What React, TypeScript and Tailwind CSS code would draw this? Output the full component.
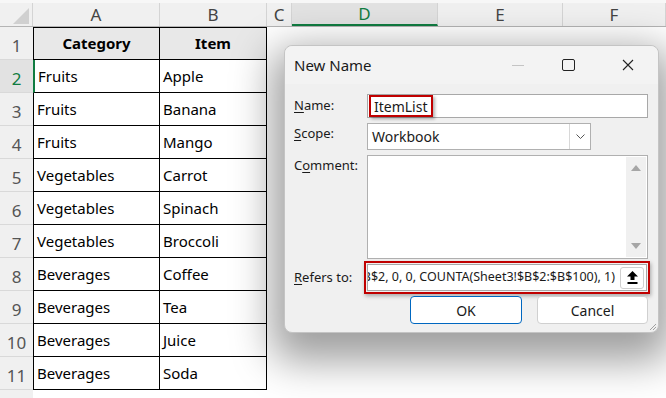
import React from "react";

const data = [
  ["Fruits", "Apple"],
  ["Fruits", "Banana"],
  ["Fruits", "Mango"],
  ["Vegetables", "Carrot"],
  ["Vegetables", "Spinach"],
  ["Vegetables", "Broccoli"],
  ["Beverages", "Coffee"],
  ["Beverages", "Tea"],
  ["Beverages", "Juice"],
  ["Beverages", "Soda"],
];

const cols = [
  { l: "A", w: "w-[127px]" },
  { l: "B", w: "w-[107px]" },
  { l: "C", w: "w-[25px]" },
  { l: "D", w: "w-[146px]" },
  { l: "E", w: "w-[125px]" },
  { l: "F", w: "flex-1" },
];

const RowHead = ({ n, active }: { n: number; active?: boolean }) => (
  <div
    className={
      "w-[33px] shrink-0 h-full flex justify-center items-center pt-[6px] text-[17px] border-b border-[#d9d9d9] " +
      (active ? "bg-[#e2e2e2] text-[#107c41]" : "bg-[#f0f0f0] text-[#555]")
    }
  >
    {n}
  </div>
);

const Sheet = () => (
  <div className="font-['Noto_Sans',sans-serif] bg-white">
    <div className="h-[3px] bg-[#f7f7f7]" />
    {/* column headers */}
    <div className="flex h-[24px] bg-[#f0f0f0] border-b border-[#b4b4b4]">
      <div className="w-[33px] shrink-0 relative border-r border-[#d4d4d4]">
        <svg className="absolute right-[3px] bottom-[2px]" width="16" height="16" viewBox="0 0 16 16">
          <polygon points="16,0 16,16 0,16" fill="#d0d0d0" />
        </svg>
      </div>
      {cols.map((c) => (
        <div
          key={c.l}
          className={
            c.w +
            " shrink-0 flex items-center justify-center text-[17px] border-r border-[#d4d4d4] " +
            (c.l === "D" ? "bg-[#e2e2e2] text-[#107c41] border-b-2 border-b-[#107c41]" : "text-[#444]")
          }
        >
          {c.l}
        </div>
      ))}
    </div>
    {/* row 1 */}
    <div className="flex h-[33px]">
      <RowHead n={1} />
      <div className="w-[127px] border border-black bg-[#e8e8e8] flex items-center justify-center font-bold text-[15px]">
        Category
      </div>
      <div className="w-[107px] border-y border-r border-black bg-[#e8e8e8] flex items-center justify-center font-bold text-[15px]">
        Item
      </div>
    </div>
    {data.map((r, i) => (
      <div key={i} className="flex h-[33px]">
        <RowHead n={i + 2} active={i === 0} />
        <div
          className={
            "w-[127px] border-b border-r border-black border-l flex items-center pl-[3px] text-[15px] " +
            (i === 0 ? "border-l-2 border-l-[#107c41]" : "border-l-black")
          }
        >
          {r[0]}
        </div>
        <div className="w-[107px] border-b border-r border-black flex items-center pl-[3px] text-[15px]">
          {r[1]}
        </div>
      </div>
    ))}
    <div className="flex h-[33px]">
      <RowHead n={12} />
    </div>
  </div>
);

const Label = ({ u, rest }: { u: string; rest: string }) => (
  <span>
    <span className="underline underline-offset-2">{u}</span>
    {rest}
  </span>
);

const Dialog = () => (
  <div className="absolute left-[284px] top-[45px] w-[375px] h-[288px] rounded-lg border border-[#c4c4c4] bg-[#f0f0f0] shadow-[0_16px_40px_12px_rgba(0,0,0,0.38)] font-['Noto_Sans',sans-serif] text-[#1a1a1a]">
    <div className="h-[38px] flex items-center pl-[9px] rounded-t-lg bg-[#f3f3f3]">
      <span className="text-[15px]">New Name</span>
      <div className="ml-auto flex h-full">
        <div className="w-[40px] flex items-center justify-center">
          <div className="w-[12px] h-px bg-[#c4c4c4]" />
        </div>
        <div className="w-[60px] flex items-center justify-center">
          <div className="w-[13px] h-[12px] border border-[#222] rounded-[2px]" />
        </div>
        <div className="w-[60px] flex items-center justify-center">
          <svg width="12" height="12" viewBox="0 0 12 12">
            <path d="M1 1L11 11M11 1L1 11" stroke="#222" strokeWidth="1.1" />
          </svg>
        </div>
      </div>
    </div>

    <div className="pl-[9px] pr-[10px] pt-[10px] text-[13px]">
      {/* Name */}
      <div className="flex">
        <div className="w-[73px] shrink-0 pt-[2px]">
          <Label u="N" rest="ame:" />
        </div>
        <div className="flex-1 min-w-0 h-[24px] border border-[#a8a8a8] bg-white flex items-center">
          <span className="ml-[1px] h-[22px] px-[3px] border-2 border-[#c00000] shadow-[2px_2px_3px_rgba(0,0,0,0.3)] flex items-center text-[14px]">
            ItemList
          </span>
        </div>
      </div>
      {/* Scope */}
      <div className="flex mt-[5px]">
        <div className="w-[73px] shrink-0 pt-[1px]">
          <Label u="S" rest="cope:" />
        </div>
        <div className="w-[224px] h-[27px] border border-[#b0b0b0] bg-white flex">
          <div className="flex-1 flex items-center pl-[4px] text-[14px]">Workbook</div>
          <div className="w-[21px] border-l border-[#d8d8d8] flex items-center justify-center">
            <svg width="9" height="6" viewBox="0 0 9 6">
              <path d="M0.5 0.5L4.5 4.5L8.5 0.5" stroke="#555" fill="none" strokeWidth="1" />
            </svg>
          </div>
        </div>
      </div>
      {/* Comment */}
      <div className="flex mt-[5px]">
        <div className="w-[73px] shrink-0 pt-[1px]">
          C<span className="underline underline-offset-2">o</span>mment:
        </div>
        <div className="flex-1 min-w-0 h-[104px] border border-[#b0b0b0] bg-white flex justify-end">
          <div className="w-[20px] my-[1px] mr-[1px] bg-[#f0f0f0] flex flex-col items-center justify-between py-[8px]">
            <svg width="10" height="6" viewBox="0 0 10 6">
              <polygon points="5,0 10,6 0,6" fill="#a6a6a6" />
            </svg>
            <svg width="10" height="6" viewBox="0 0 10 6">
              <polygon points="0,0 10,0 5,6" fill="#a6a6a6" />
            </svg>
          </div>
        </div>
      </div>
      {/* Refers to */}
      <div className="flex items-center mt-[2px]">
        <div className="w-[73px] shrink-0 whitespace-nowrap">
          <Label u="R" rest="efers to:" />
        </div>
        <div className="flex-1 min-w-0 ml-[-3px] mr-[-2px] h-[33px] border-2 border-[#c00000] shadow-[1px_2px_4px_rgba(0,0,0,0.3)] p-px">
          <div className="h-full border border-[#a8a8a8] bg-white flex items-center">
            <div className="flex-1 min-w-0 overflow-hidden flex justify-end pr-[5px] text-[12.5px] whitespace-nowrap">
              <span className="shrink-0">=OFFSET(Sheet3!$B$2, 0, 0, COUNTA(Sheet3!$B$2:$B$100), 1)</span>
            </div>
            <div className="w-[24px] h-[22px] shrink-0 mr-[2px] border border-[#cfcfcf] rounded-[3px] bg-white flex items-center justify-center">
              <svg width="11" height="13" viewBox="0 0 11 13">
                <polygon points="5.5,0 11,5.5 7.5,5.5 7.5,9 3.5,9 3.5,5.5 0,5.5" fill="#000" />
                <rect x="0.5" y="11" width="10" height="2" fill="#000" />
              </svg>
            </div>
          </div>
        </div>
      </div>
      {/* Buttons */}
      <div className="flex justify-end gap-[15px] mt-[2px]">
        <button className="w-[112px] h-[28px] border border-[#0067c0] rounded-[4px] bg-white text-[14px]">
          OK
        </button>
        <button className="w-[111px] h-[28px] border border-[#d0d0d0] rounded-[4px] bg-white text-[14px]">
          Cancel
        </button>
      </div>
    </div>
    <svg className="absolute right-[1px] bottom-[1px]" width="10" height="10" viewBox="0 0 10 10">
      <path d="M9 3L3 9M9 6L6 9" stroke="#a0a0a0" strokeWidth="1" />
    </svg>
  </div>
);

export default function App() {
  return (
    <div className="relative w-[666px] h-[398px] overflow-hidden bg-white">
      <Sheet />
      <Dialog />
    </div>
  );
}
